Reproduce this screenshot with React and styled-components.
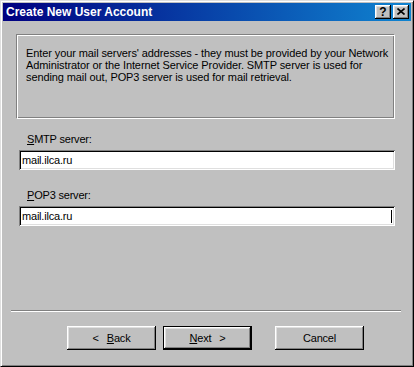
import React from "react";
import styled, { createGlobalStyle } from "styled-components";

const Global = createGlobalStyle`
  html, body { margin: 0; padding: 0; background: #c0c0c0; }
  #root { width: 414px; height: 367px; }
`;

const Window = styled.div`
  box-sizing: border-box;
  width: 414px;
  height: 367px;
  background: #c0c0c0;
  border: 1px solid;
  border-color: #dfdfdf #000 #000 #dfdfdf;
  box-shadow: inset 1px 1px #fff, inset -1px -1px #808080;
  padding: 2px;
  display: flex;
  flex-direction: column;
  font-family: "Liberation Sans", Arial, sans-serif;
  font-size: 11px;
  color: #000;
`;

const TitleBar = styled.div`
  height: 18px;
  flex: none;
  display: flex;
  align-items: center;
  padding: 0 2px 0 3px;
  background: linear-gradient(90deg, #000080 0%, #1084d0 100%);
  color: #fff;
  font-weight: bold;
  font-size: 12px;
  white-space: nowrap;
`;

const TitleButtons = styled.div`
  margin-left: auto;
  display: flex;
  gap: 2px;
`;

const TitleButton = styled.div`
  width: 16px;
  height: 14px;
  box-sizing: border-box;
  background: #c0c0c0;
  box-shadow: inset -1px -1px #000, inset 1px 1px #fff, inset -2px -2px #808080, inset 2px 2px #dfdfdf;
  display: flex;
  align-items: center;
  justify-content: center;
  color: #000;
  font-weight: bold;
  font-size: 12px;
  line-height: 1;
  padding-bottom: 1px;
`;

const Main = styled.div`
  padding: 13px 16px 0 13px;
`;

const Panel = styled.div`
  box-sizing: border-box;
  height: 85px;
  border: 1px solid;
  border-color: #808080 #fff #fff #808080;
  box-shadow: inset 1px 1px #fff, inset -1px -1px #808080;
  padding: 12px 9px 0 9px;
  line-height: 12px;
  white-space: nowrap;
  letter-spacing: -0.1px;
`;

const Fields = styled.div`
  margin: 14px 0 0 3px;
  display: flex;
  flex-direction: column;
  gap: 19px;
`;

const Field = styled.div`
  display: flex;
  flex-direction: column;
  gap: 5px;
`;

const Label = styled.div`
  padding-left: 8px;
  line-height: 12px;
  letter-spacing: -0.2px;
`;

const Input = styled.div`
  box-sizing: border-box;
  width: 376px;
  height: 20px;
  background: #fff;
  box-shadow: inset 1px 1px #808080, inset -1px -1px #fff, inset 2px 2px #000, inset -2px -2px #dfdfdf;
  padding: 0 3px 0 3px;
  display: flex;
  align-items: center;
  justify-content: space-between;
  letter-spacing: -0.2px;
`;

const Caret = styled.span`
  width: 1px;
  height: 13px;
  background: #000;
`;

const Footer = styled.div`
  margin-top: auto;
  padding-bottom: 14px;
`;

const Separator = styled.div`
  margin: 0 10px 0 8px;
  border-top: 1px solid #808080;
  border-bottom: 1px solid #fff;
`;

const ButtonRow = styled.div`
  margin-top: 14px;
  padding-left: 64px;
  display: flex;
`;

const Button = styled.div`
  box-sizing: border-box;
  width: 89px;
  height: 24px;
  margin-left: ${(p) => p.$gap || 0}px;
  background: #c0c0c0;
  border: ${(p) => (p.$default ? "1px solid #000" : "none")};
  box-shadow: inset -1px -1px #000, inset 1px 1px #fff, inset -2px -2px #808080, inset 2px 2px #dfdfdf;
  display: flex;
  align-items: center;
  justify-content: center;
  gap: 8px;
  letter-spacing: -0.2px;
`;

const Key = styled.span`
  text-decoration: underline;
  text-underline-offset: 1px;
`;

export default function App() {
  return (
    <>
      <Global />
      <Window>
        <TitleBar>
          Create New User Account
          <TitleButtons>
            <TitleButton>?</TitleButton>
            <TitleButton>
              <svg width="8" height="7" viewBox="0 0 8 7">
                <path d="M0.5 0.5 L7.5 6.5 M7.5 0.5 L0.5 6.5" stroke="#000" strokeWidth="1.6" fill="none" />
              </svg>
            </TitleButton>
          </TitleButtons>
        </TitleBar>
        <Main>
          <Panel>
            Enter your mail servers' addresses - they must be provided by your Network
            <br />
            Administrator or the Internet Service Provider. SMTP server is used for
            <br />
            sending mail out, POP3 server is used for mail retrieval.
          </Panel>
          <Fields>
            <Field>
              <Label>
                <Key>S</Key>MTP server:
              </Label>
              <Input>
                <span>mail.ilca.ru</span>
              </Input>
            </Field>
            <Field>
              <Label>
                <Key>P</Key>OP3 server:
              </Label>
              <Input>
                <span>mail.ilca.ru</span>
                <Caret />
              </Input>
            </Field>
          </Fields>
        </Main>
        <Footer>
          <Separator />
          <ButtonRow>
            <Button>
              <span>&lt;</span>
              <span>
                <Key>B</Key>ack
              </span>
            </Button>
            <Button $default $gap={7}>
              <span>
                <Key>N</Key>ext
              </span>
              <span>&gt;</span>
            </Button>
            <Button $gap={23}>Cancel</Button>
          </ButtonRow>
        </Footer>
      </Window>
    </>
  );
}
